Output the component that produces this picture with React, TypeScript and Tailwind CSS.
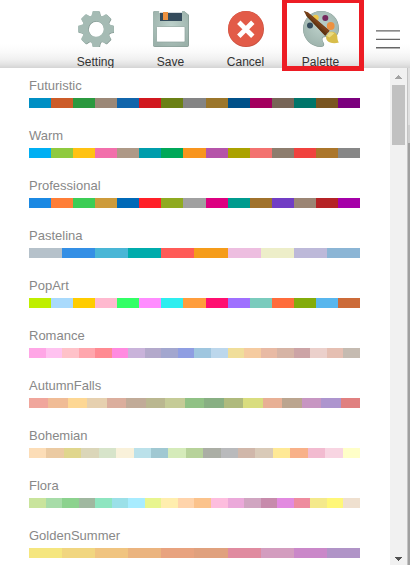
import React from 'react';

const palettes: { name: string; colors: string[] }[] = [
  { name: 'Futuristic', colors: '#008fc4 #cc5c29 #2b993f #9b8877 #1165ab #d1181f #6b8015 #848484 #9b762b #005089 #a3005f #776557 #00756a #795521 #7b007d'.split(' ') },
  { name: 'Warm', colors: '#00aff3 #8fca3f #ffc212 #f26fab #ae9987 #009dac #00a859 #f8951e #b554a9 #aba200 #f3726f #8d7d6e #f0423e #ab762b #878787'.split(' ') },
  { name: 'Professional', colors: '#1b89e3 #ff7e37 #3ccd55 #cd9b3b #0069b7 #ff2028 #8faa20 #a0a0a0 #dc0080 #009b8e #a0722c #713dc4 #9b8574 #b52326 #a500a8'.split(' ') },
  { name: 'Pastelina', colors: '#b5c1ca #348fe5 #49b6d6 #00acac #ff5b57 #f59c1a #edbee0 #edeec9 #bdb9d9 #8bb5d5'.split(' ') },
  { name: 'PopArt', colors: '#bfef00 #a9dafc #ffcc00 #ffb9cf #33ff66 #ff8cff #2eeeef #ff9d3c #ff0f70 #9f70ff #7acbbd #ff6c3b #83ac0b #58b6ed #cc6b39'.split(' ') },
  { name: 'Romance', colors: '#ffa6e6 #ffc2f0 #ffc2c9 #ffa6ad #ff8a92 #ff8ae0 #c9b3da #b3a9cb #a3a7cf #8f9ee2 #9fc6df #bcd7ec #f0de9a #f5cba0 #e8baa4 #d6b4a5 #cca4a6 #ebd0cb #e5bfb2 #c5bbb1'.split(' ') },
  { name: 'AutumnFalls', colors: '#f0a69c #f0bc96 #fdd794 #e6d0af #dbae9d #c1ab98 #bab790 #c5cb97 #90c185 #88af83 #afba7d #d9dd7f #e8b095 #bba58f #c796c2 #ad95ce #e08080'.split(' ') },
  { name: 'Bohemian', colors: '#fcddb7 #ebcaa2 #e0d68d #dbd6b9 #d7e4ca #f9f1da #bbe1ea #a0c8d2 #d5ebba #b7d29a #abaea5 #b9babc #d0b7aa #d9cab8 #ffe996 #f8b189 #f2bbd0 #f8d5e2 #ffffc8'.split(' ') },
  { name: 'Flora', colors: '#c9e49c #a7dca8 #8cd28e #a0b8a0 #8ee5c0 #9be0e8 #a8ecff #e8f58f #ffeeae #ffd4ab #fbc38c #fdbdde #eba9da #d0a5c1 #c78bac #e28ae0 #ee8c9e #f4e98b #fff778 #efe0cf'.split(' ') },
  { name: 'GoldenSummer', colors: '#f5e67f #f1d680 #f0c480 #ebb47f #e8a37f #e0a17e #e08ba0 #d39dbf #ca88c9 #b094c7'.split(' ') },
];

const teeth = [0, 45, 90, 135, 180, 225, 270, 315];

function GearShape({ fill }: { fill: string }) {
  return (
    <g fill={fill}>
      <circle cx="18" cy="18" r="10.6" fill="none" stroke={fill} strokeWidth="5.8" />
      {teeth.map((angle) => (
        <path key={angle} d="M11.5 6.5Q14 5 14.4.8Q14.6.1 15.3.1h5.4q.7 0 .9.7Q22 5 24.5 6.5L22 8.5h-8z" transform={`rotate(${angle} 18 18)`} />
      ))}
    </g>
  );
}

function GearIcon() {
  return (
    <svg className="h-9 w-9 shrink-0" viewBox="0 0 36 36">
      <defs>
        <radialGradient id="metal" gradientUnits="userSpaceOnUse" cx="18" cy="15" r="23">
          <stop offset="0" stopColor="#bdd1cb" />
          <stop offset="1" stopColor="#9bb1aa" />
        </radialGradient>
      </defs>
      <g transform="translate(.5 .5)">
        <GearShape fill="#80958f" />
      </g>
      <GearShape fill="#a5bbb4" />
    </svg>
  );
}

function SaveIcon() {
  return (
    <svg className="h-9 w-9 shrink-0" viewBox="0 0 36 36">
      <path fill="#80958e" d="M0 2a2 2 0 012-2h29l5 4v30a2 2 0 01-2 2H2a2 2 0 01-2-2z" />
      <path fill="url(#metal)" d="M0 2a2 2 0 012-2h29l4.4 4v29.4a2 2 0 01-2 2H2a2 2 0 01-2-2z" />
      <path fill="#fff" d="M6.2 0H29v2H6.2z" />
      <path fill="#344b5c" d="M7 1.8h22V10H7z" />
      <path fill="#ed9140" d="M10 1h5v8h-5z" />
      <rect x="3.5" y="15.5" width="28.5" height="15.5" rx="1" fill="#fff" stroke="#8da29b" strokeWidth=".7" />
    </svg>
  );
}

function CancelIcon() {
  return (
    <svg className="h-9 w-9 shrink-0" viewBox="0 0 36 36">
      <circle cx="18" cy="18" r="18" fill="#c9503f" />
      <circle cx="17.8" cy="17.7" r="17.5" fill="#e25b48" />
      <path d="M10.8 11.3l14 14M24.8 11.3l-14 14" stroke="#fff" strokeWidth="4.8" />
    </svg>
  );
}

function PaletteIcon() {
  return (
    <svg className="h-9 w-9 shrink-0" viewBox="0 0 36 36">
      <path fill="#869c95" d="M18 0C29 0 36 8 36 17.5c0 6-3 9.500-8 9-5-.5-9-1.500-8.500 2.500.3 2 1.700 2.500 1.700 4.300 0 1.800-1.200 2.700-3.200 2.700C8 36 0 28 0 18S8 0 18 0z" />
      <path fill="url(#metal)" d="M18 .3C28.500.3 35.500 8 35.500 17.300c0 5.700-3 8.700-7.500 8.200-5.500-.5-9.600-.9-9.100 3.200.3 2 1.700 2.600 1.700 4.300 0 1.600-1 2.400-2.800 2.400C8 35.400.4 27.700.4 18S8 .3 18 .3z" />
      <circle cx="7" cy="14.500" r="3" fill="#344b5c" />
      <circle cx="12.700" cy="6.800" r="3" fill="#efc84a" />
      <circle cx="22.300" cy="7" r="3" fill="#75285c" />
      <circle cx="27.700" cy="15" r="3.900" fill="#ed9140" />
      <path fill="#6f3c15" d="M.8 0L5 1.600l21.500 18.200-4.300 5L3.500 5z" />
      <path fill="#7d421a" d="M.8 0L5 1.600l21.500 18.200-1.500 1.800z" />
      <path fill="#5d3211" d="M22.200 24.800l1.500-1.800L3 3.700 3.500 5z" />
      <path fill="#d8bd4a" d="M26.500 21c4.700-.7 7.600 1.600 7.800 4.600.1 2.400.4 4.400 1.600 6-5 1.200-9.500.6-11.800-2.200-1.200-1.500-1.100-3-.8-4.400z" />
      <path fill="#eadb82" d="M26.200 21.300c2.600-.3 4.200.1 5.200 1l-4.800 4.300-3-1.500z" />
    </svg>
  );
}

const tools = [
  { label: 'Setting', icon: <GearIcon /> },
  { label: 'Save', icon: <SaveIcon /> },
  { label: 'Cancel', icon: <CancelIcon /> },
  { label: 'Palette', icon: <PaletteIcon /> },
];

export default function App() {
  return (
    <div className="relative h-[565px] w-[410px] overflow-hidden bg-white font-['Liberation_Sans',Arial,sans-serif]">
      <header className="flex h-[68px] overflow-hidden bg-[linear-gradient(to_bottom,#fff_0,#fff_44px,#fafafa_52px,#f1f1f1_59px,#e4e4e4_64px,#d4d4d4_68px)] pl-[58px]">
        {tools.map((tool) => (
          <div key={tool.label} className="flex w-[75px] shrink-0 flex-col items-center pt-[11px]">
            {tool.icon}
            <span className="mt-[7px] text-[12px] leading-4 text-[#333]">{tool.label}</span>
          </div>
        ))}
        <svg className="ml-[18px] mt-[30px] h-[19px] w-6 shrink-0" viewBox="0 0 24 19">
          <path d="M0 .9h24M0 9.400h24M0 17.700h24" stroke="#666" strokeWidth="1.400" />
        </svg>
      </header>
      <main className="flex h-[497px]">
        <div className="w-[390px] shrink-0 pl-[29px] pr-[30px] pt-2">
          {palettes.map((palette) => (
            <section key={palette.name} className="h-[50px]">
              <h2 className="h-[22px] pt-px text-[13px] leading-[18px] text-[#888]">{palette.name}</h2>
              <div className="flex h-[10px]">
                {palette.colors.map((color, i) => (
                  <span key={i} className="flex-1" style={{ backgroundColor: color }} />
                ))}
              </div>
            </section>
          ))}
        </div>
        <div className="flex w-[17px] shrink-0 flex-col items-center bg-[#f1f1f1]">
          <svg className="h-[17px] w-[17px] shrink-0" viewBox="0 0 17 17" shapeRendering="crispEdges">
            <path d="M8 7h1v1h1v1h1v1h1v1H5v-1h1V9h1V8h1z" fill="#a3a3a3" />
          </svg>
          <div className="h-[60px] w-[13px] bg-[#c1c1c1]" />
          <svg className="mt-auto h-[17px] w-[17px] shrink-0" viewBox="0 0 17 17" shapeRendering="crispEdges">
            <path d="M5 9h7v1h-1v1h-1v1H9v1H8v-1H7v-1H6v-1H5z" fill="#505050" />
          </svg>
        </div>
        <div className="flex w-[3px] shrink-0 flex-col border-l border-[#c4c4c4]">
          <div className="h-[57px] bg-[#e0e0e0]" />
          <div className="h-[18px] bg-[#d0d0d0]" />
          <div className="grow bg-[#a0a0a0]" />
        </div>
      </main>
      <div className="absolute left-[282px] top-0 h-[71px] w-[82px] border-[5px] border-t-[3px] border-[#ed1c24]" />
    </div>
  );
}
